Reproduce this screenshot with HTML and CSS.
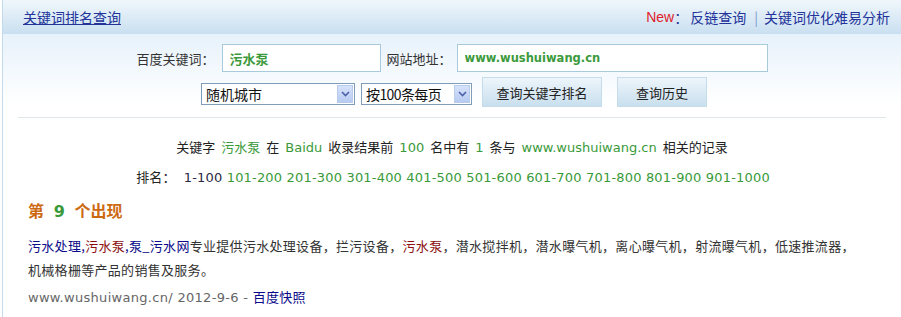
FILE: index.html
```html
<!DOCTYPE html>
<html lang="zh-CN">
<head>
    <meta charset="UTF-8">
    <title>关键词排名查询</title>
    <link rel="stylesheet" href="styles.css">
</head>
<body>
    <div class="page">
        <!-- 顶部标题栏 -->
        <div class="topbar">
            <a class="title" href="#">关键词排名查询</a>
            <div class="links">
                <span class="new">New</span><span class="colon">：</span><a href="#">反链查询</a><span class="sep">|</span><a href="#">关键词优化难易分析</a>
            </div>
        </div>

        <!-- 查询表单 -->
        <div class="search">
            <div class="row">
                <label>百度关键词：</label>
                <input class="kw" type="text" value="污水泵">
                <label>网站地址：</label>
                <input class="site" type="text" value="www.wushuiwang.cn">
            </div>
            <div class="row row-options">
                <div class="select city">
                    <span class="select-text">随机城市</span>
                    <span class="select-arrow"><svg width="9" height="6" viewBox="0 0 9 6"><path d="M1 1 L4.5 4.5 L8 1" fill="none" stroke="#4d61a8" stroke-width="1.6"/></svg></span>
                </div>
                <div class="select per-page">
                    <span class="select-text">按100条每页</span>
                    <span class="select-arrow"><svg width="9" height="6" viewBox="0 0 9 6"><path d="M1 1 L4.5 4.5 L8 1" fill="none" stroke="#4d61a8" stroke-width="1.6"/></svg></span>
                </div>
                <button class="btn btn-query">查询关键字排名</button>
                <button class="btn btn-history">查询历史</button>
            </div>
        </div>

        <!-- 查询结果 -->
        <div class="result">
            <div class="divider"></div>
            <p class="summary">
                关键字<span class="hl">污水泵</span>在<span class="hl">Baidu</span>收录结果前<span class="hl">100</span>名中有<span class="hl">1</span>条与<span class="hl">www.wushuiwang.cn</span>相关的记录
            </p>
            <p class="pages">
                排名：<span class="cur">1-100</span>
                <a href="#">101-200</a>
                <a href="#">201-300</a>
                <a href="#">301-400</a>
                <a href="#">401-500</a>
                <a href="#">501-600</a>
                <a href="#">601-700</a>
                <a href="#">701-800</a>
                <a href="#">801-900</a>
                <a href="#">901-1000</a>
            </p>
            <h3 class="rank">第 <em>9</em> 个出现</h3>
            <p class="desc"><span class="t-blue">污水处理,</span><span class="t-red">污水泵</span><span class="t-blue">,泵_污水网</span><span>专业提供污水处理设备，拦污设备，</span><span class="t-red">污水泵</span><span>，潜水搅拌机，潜水曝气机，离心曝气机，射流曝气机，低速推流器，</span><span>机械格栅等产品的销售及服务。</span></p>
            <p class="url">www.wushuiwang.cn/ 2012-9-6 - <a href="#">百度快照</a></p>
        </div>
    </div>
</body>
</html>
```

FILE: styles.css
```css
/* 基础重置 */
* {
    margin: 0;
    padding: 0;
    box-sizing: border-box;
}

body {
    font-family: "Noto Sans CJK SC", sans-serif;
    font-size: 13px;
    color: #333;
    background: #fff;
}

a {
    text-decoration: none;
}

/* 页面外框 */
.page {
    margin-left: 2px;
    border-left: 1px solid #c3d9ec;
    min-height: 317px;
}

/* 顶部标题栏 */
.topbar {
    height: 34px;
    display: flex;
    align-items: center;
    justify-content: space-between;
    padding: 0 11px 0 20px;
    background: linear-gradient(#f0f7fc, #c9dff0);
    font-size: 14px;
}

.topbar .title {
    color: #22339a;
    text-decoration: underline;
}

.links {
    display: flex;
    align-items: center;
    color: #22339a;
}

.links a {
    color: #22339a;
}

.links .new {
    font-family: "Liberation Sans", sans-serif;
    color: #e0202a;
}

.links .colon {
    margin-right: 2px;
}

.links .sep {
    color: #7f9bd0;
    margin: 0 6px 0 8px;
}

/* 查询表单 */
.search {
    padding: 10px 0 10px;
    background: linear-gradient(#e7f2fb, #fff 85%);
}

.row {
    display: flex;
    align-items: center;
    justify-content: center;
}

.row label {
    color: #333;
    margin-right: 7px;
}

.row input {
    height: 28px;
    border: 1px solid #a9cadc;
    background: #fff;
    padding: 0 7px;
    font-family: "DejaVu Sans", "Noto Sans CJK SC", sans-serif;
    font-size: 11.5px;
    font-weight: bold;
    color: #3c9a3c;
    outline: none;
}

.row .kw {
    width: 159px;
    margin-right: 6px;
    font-size: 13px;
}

.row .site {
    width: 311px;
    margin-left: -2px;
}

.row-options {
    margin-top: 5px;
    height: 30px;
    padding-left: 4px;
}

/* 下拉框 */
.select {
    height: 22px;
    display: flex;
    align-items: center;
    justify-content: space-between;
    border: 1px solid #7f9db9;
    background: #fff;
    padding: 1px;
    margin-top: 3px;
    font-size: 14px;
    color: #111;
}

.select-text {
    padding-left: 3px;
    line-height: 18px;
}

.select-arrow {
    width: 16px;
    height: 18px;
    display: flex;
    align-items: center;
    justify-content: center;
    background: linear-gradient(#d6e2fb, #b7cbf1);
    border: 1px solid #b9cbea;
}

.city {
    width: 154px;
    margin-right: 6px;
}

.per-page {
    width: 111px;
    margin-right: 10px;
}

.per-page .select-text {
    letter-spacing: -0.6px;
}

/* 按钮 */
.btn {
    height: 30px;
    border: 1px solid #c5dceb;
    background: linear-gradient(#edf5fb, #c9dfee);
    font-family: "Noto Sans CJK SC", sans-serif;
    font-size: 13px;
    color: #222;
    cursor: pointer;
}

.btn-query {
    width: 120px;
    margin-right: 15px;
}

.btn-history {
    width: 90px;
}

/* 查询结果 */
.result {
    padding: 0 15px;
}

.divider {
    height: 1px;
    background: #dde7ea;
    margin-bottom: 20px;
}

.summary,
.pages {
    text-align: center;
    line-height: 20px;
    font-family: "DejaVu Sans", "Noto Sans CJK SC", sans-serif;
    font-size: 13px;
    color: #222;
}

.summary .hl {
    color: #3a9a3a;
    margin: 0 6px;
}

.pages {
    margin-top: 10px;
    letter-spacing: 0.18px;
    padding-left: 2px;
}

.pages .cur {
    color: #2a2a44;
    margin-left: 8px;
}

.pages a {
    color: #3a9a3a;
}

.rank {
    margin-top: 10px;
    padding-left: 10px;
    line-height: 24px;
    font-size: 16px;
    font-weight: bold;
    color: #cc6a12;
}

.rank em {
    font-style: normal;
    font-family: "DejaVu Sans", sans-serif;
    color: #3a9a3a;
    margin: 0 6px;
}

.desc {
    margin-top: 10px;
    padding-left: 10px;
    padding-right: 30px;
    line-height: 24px;
    font-size: 13px;
    letter-spacing: 0.3px;
    color: #333;
}

.t-blue {
    color: #0a0a8a;
}

.t-red {
    color: #8a1010;
}

.url {
    margin-top: 4px;
    padding-left: 10px;
    line-height: 24px;
    font-family: "DejaVu Sans", "Noto Sans CJK SC", sans-serif;
    font-size: 13px;
    letter-spacing: 0.3px;
    color: #666;
}

.url a {
    color: #0a0a8a;
}
```
